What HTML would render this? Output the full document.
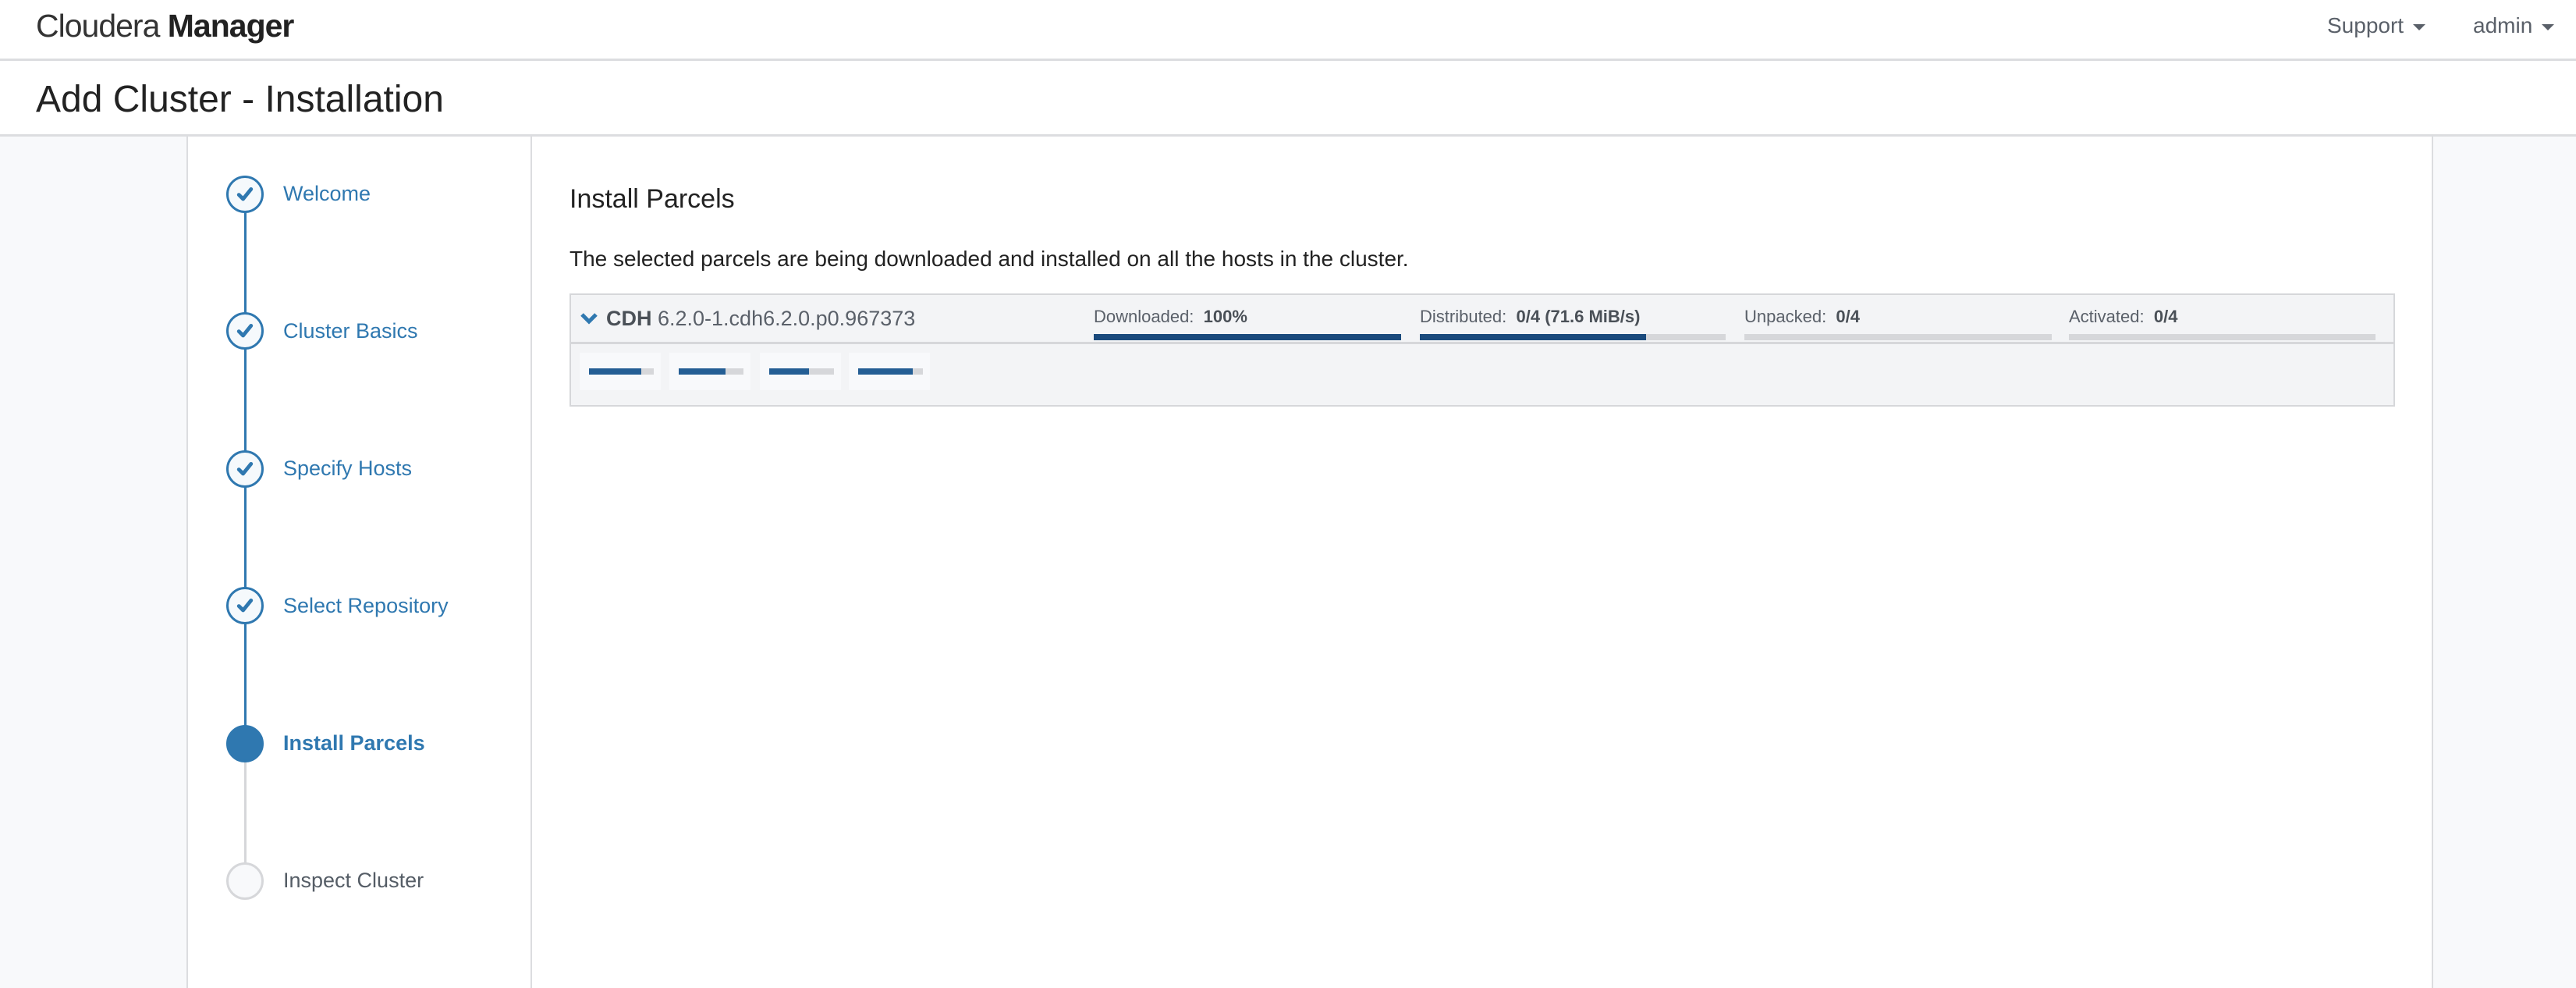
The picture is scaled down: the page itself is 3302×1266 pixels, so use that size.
<!DOCTYPE html>
<html><head><meta charset="utf-8"><style>
*{margin:0;padding:0;box-sizing:border-box}
body{width:3302px;height:1266px;overflow:hidden;background:#fff;font-family:"Liberation Sans",Arial,sans-serif;position:relative;color:#1a1a1a}
.a{position:absolute;white-space:nowrap}
.caret{display:inline-block;width:0;height:0;border-left:8px solid transparent;border-right:8px solid transparent;border-top:8px solid #5a6069;vertical-align:middle;margin-left:12px}
.step{position:absolute;left:290px;width:48px;height:48px;border-radius:50%;border:3px solid #2f78b0;background:#f5f9fc}
.lbl{position:absolute;left:363px;font-size:27px;color:#2f78b0}
.bar{position:absolute;height:8px;background:#d6d7da}
.bar i{display:block;height:8px;background:#1a4a7c}
.tile{position:absolute;top:452px;width:104px;height:48px;background:#f8f9fb}
.tile .bar{left:12px;top:20px;width:83px}
.tile .bar i{background:#245e94}
.pl{font-size:22px;color:#5a6069}
.pl b{color:#4a5057}
</style></head><body>
<div class="a" style="left:0;top:0;width:3302px;height:78px;border-bottom:3px solid #dcdde0"></div>
<div class="a" style="left:46px;top:10px;font-size:41px;color:#333;letter-spacing:-1px">Cloudera <b style="color:#222">Manager</b></div>
<div class="a" style="left:2983px;top:17px;font-size:28px;color:#5a6069">Support<span class="caret"></span></div>
<div class="a" style="left:3170px;top:17px;font-size:28px;color:#5a6069">admin<span class="caret"></span></div>
<div class="a" style="left:0;top:78px;width:3302px;height:97px;border-bottom:3px solid #dcdde0"></div>
<div class="a" style="left:46px;top:100px;font-size:48px;color:#222">Add Cluster - Installation</div>
<div class="a" style="left:0;top:175px;width:241px;height:1091px;background:#f8f9fb;border-right:2px solid #dcdde0"></div>
<div class="a" style="left:680px;top:175px;width:2px;height:1091px;background:#dcdde0"></div>
<div class="a" style="left:3117px;top:175px;width:185px;height:1091px;background:#f8f9fb;border-left:2px solid #dcdde0"></div>
<div class="a" style="left:313px;top:248px;width:3px;height:704px;background:#2f78b0"></div>
<div class="a" style="left:313px;top:952px;width:3px;height:176px;background:#d6d7da"></div>
<svg width="0" height="0" style="position:absolute"><defs><symbol id="ck" viewBox="0 0 20 20"><path d="M3.5 10.5 L8 15 L16.5 4.5" fill="none" stroke="#2f78b0" stroke-width="4" stroke-linecap="round" stroke-linejoin="round"/></symbol></defs></svg>
<div class="step" style="top:225px"><svg style="position:absolute;left:9px;top:9px" width="24" height="24"><use href="#ck"/></svg></div>
<div class="step" style="top:400px"><svg style="position:absolute;left:9px;top:9px" width="24" height="24"><use href="#ck"/></svg></div>
<div class="step" style="top:577px"><svg style="position:absolute;left:9px;top:9px" width="24" height="24"><use href="#ck"/></svg></div>
<div class="step" style="top:752px"><svg style="position:absolute;left:9px;top:9px" width="24" height="24"><use href="#ck"/></svg></div>
<div class="step" style="top:929px;background:#2f78b0;border-color:#2f78b0"></div>
<div class="step" style="top:1105px;background:#f8f9fb;border-color:#d6d7da"></div>
<div class="lbl" style="top:233px">Welcome</div>
<div class="lbl" style="top:409px">Cluster Basics</div>
<div class="lbl" style="top:585px">Specify Hosts</div>
<div class="lbl" style="top:761px">Select Repository</div>
<div class="lbl" style="top:937px;font-weight:bold">Install Parcels</div>
<div class="lbl" style="top:1113px;color:#555d66">Inspect Cluster</div>
<div class="a" style="left:730px;top:236px;font-size:34px;color:#222">Install Parcels</div>
<div class="a" style="left:730px;top:316px;font-size:28px;color:#222">The selected parcels are being downloaded and installed on all the hosts in the cluster.</div>
<div class="a" style="left:730px;top:376px;width:2340px;height:145px;background:#f3f4f6;border:2px solid #d6d7da"></div>
<div class="a" style="left:732px;top:438px;width:2336px;height:3px;background:#d6d7da"></div>
<svg class="a" style="left:743px;top:399px" width="24" height="18" viewBox="0 0 24 18"><path d="M3 4 L12 13 L21 4" fill="none" stroke="#2f78b0" stroke-width="5"/></svg>
<div class="a" style="left:777px;top:393px;font-size:27px;color:#5a6069"><b style="color:#4a5057">CDH</b> 6.2.0-1.cdh6.2.0.p0.967373</div>
<div class="a pl" style="left:1402px;top:393px">Downloaded:&nbsp; <b>100%</b></div>
<div class="a pl" style="left:1820px;top:393px">Distributed:&nbsp; <b>0/4 (71.6 MiB/s)</b></div>
<div class="a pl" style="left:2236px;top:393px">Unpacked:&nbsp; <b>0/4</b></div>
<div class="a pl" style="left:2652px;top:393px">Activated:&nbsp; <b>0/4</b></div>
<div class="bar" style="left:1402px;top:428px;width:394px"><i style="width:100%"></i></div>
<div class="bar" style="left:1820px;top:428px;width:392px"><i style="width:74%"></i></div>
<div class="bar" style="left:2236px;top:428px;width:394px"></div>
<div class="bar" style="left:2652px;top:428px;width:393px"></div>
<div class="tile" style="left:743px"><div class="bar"><i style="width:81%"></i></div></div>
<div class="tile" style="left:858px"><div class="bar"><i style="width:72%"></i></div></div>
<div class="tile" style="left:974px"><div class="bar"><i style="width:62%"></i></div></div>
<div class="tile" style="left:1088px"><div class="bar"><i style="width:84%"></i></div></div>
</body></html>
